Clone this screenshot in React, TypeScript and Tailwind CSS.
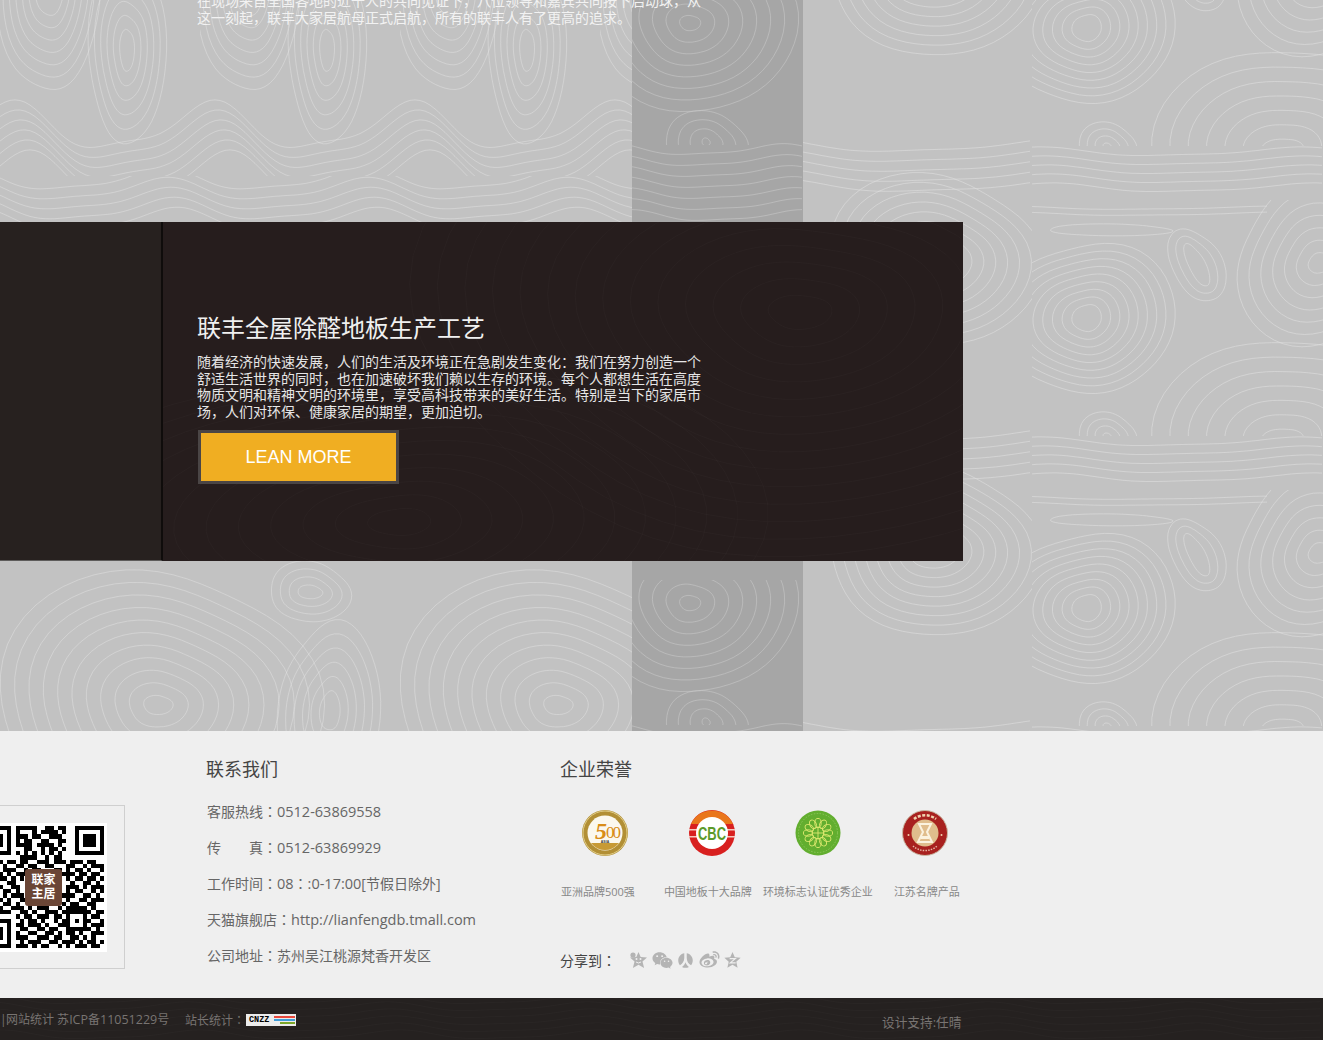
import type { ReactNode } from "react";
import { FaRenren, FaWeibo, FaWeixin } from "react-icons/fa";

function blob(cx: number, cy: number, rx: number, ry: number, seed: number, tilt = 0) {
  const pts: string[] = [];
  const n = 60;
  const t = (tilt * Math.PI) / 180;
  for (let i = 0; i < n; i++) {
    const a = (i / n) * Math.PI * 2;
    const f = 1 + 0.06 * Math.sin(2 * a + seed) + 0.035 * Math.sin(3 * a + seed * 2.1) + 0.01 * Math.sin(5 * a + seed * 3.3);
    const x = rx * f * Math.cos(a);
    const y = ry * f * Math.sin(a);
    pts.push(`${(cx + x * Math.cos(t) - y * Math.sin(t)).toFixed(1)} ${(cy + x * Math.sin(t) + y * Math.cos(t)).toFixed(1)}`);
  }
  return `M${pts.join("L")}Z`;
}

function rings(cx: number, cy: number, rx0: number, ry0: number, dx: number, dy: number, n: number, seed: number, tilt = 0) {
  const out: string[] = [];
  for (let i = 0; i < n; i++) out.push(blob(cx, cy, rx0 + dx * i, ry0 + dy * i, seed, tilt));
  return out.join(" ");
}

function wave(x0: number, x1: number, y: number, amp: number, period: number, phase: number) {
  const pts: string[] = [];
  for (let x = x0; x <= x1; x += 5) {
    const v = y + amp * Math.sin(((x - phase) / period) * Math.PI * 2) + amp * 0.3 * Math.sin(((x - phase) / period) * Math.PI * 4 + 1);
    pts.push(`${x} ${v.toFixed(1)}`);
  }
  return `M${pts.join("L")}`;
}

function waves(x0: number, x1: number, y0: number, step: number, n: number, amp: number, period: number, phase: number) {
  const out: string[] = [];
  for (let i = 0; i < n; i++) out.push(wave(x0, x1, y0 + step * i, amp, period, phase + i * 3));
  return out.join(" ");
}

function Topography() {
  return (
    <svg className="absolute inset-0" width="1323" height="731" aria-hidden="true">
      <defs>
        <clipPath id="ltop"><rect x="0" y="0" width="200" height="176" /></clipPath>
        <clipPath id="lmid"><rect x="0" y="176" width="200" height="46" /></clipPath>
        <clipPath id="rr"><rect x="232" y="0" width="300" height="236" /></clipPath>
        <clipPath id="rl"><rect x="0" y="0" width="232" height="290" /></clipPath>
        <clipPath id="stop"><rect x="0" y="0" width="171" height="145" /></clipPath>
        <pattern id="leftTile" x="0" y="0" width="200" height="222" patternUnits="userSpaceOnUse">
          <g fill="none" stroke="#e2e2e2" strokeOpacity="0.7" strokeWidth="0.7">
            <g clipPath="url(#ltop)">
              <path d={rings(127, 50, 7, 22, 6, 15, 6, 1.2)} />
              <path d={rings(50, -15, 14, 32, 6, 13, 7, 2.4)} />
              <path d={waves(0, 200, 128, 10, 6, 22, 200, 60)} />
            </g>
            <g clipPath="url(#lmid)">
              <path d={waves(0, 200, 180, 10, 5, 10, 200, 10)} />
            </g>
          </g>
        </pattern>
        <pattern id="lowerTile" x="0" y="561" width="400" height="170" patternUnits="userSpaceOnUse">
          <g fill="none" stroke="#e2e2e2" strokeOpacity="0.7" strokeWidth="0.7">
            <path d={rings(158, 144, 14, 10, 14, 13, 11, 0.9)} />
            <path d={rings(310, 31, 12, 7, 9, 8, 4, 0.4)} />
            <path d={rings(330, 150, 10, 20, 8, 14, 6, 2.6)} />
            <path d={rings(-70, 144, 14, 10, 10, 13, 6, 1.9)} />
            <path d={rings(470, 144, 14, 10, 10, 13, 6, 1.9)} />
          </g>
        </pattern>
        <pattern id="rightTile" x="800" y="200" width="523" height="290" patternUnits="userSpaceOnUse">
          <g fill="none" stroke="#e0e0e0" strokeOpacity="0.8" strokeWidth="0.7">
            <g clipPath="url(#rl)">
              <path d={rings(133, 60, 14, 9, 11, 10, 9, 0.7)} />
              <path d={rings(133, 350, 14, 9, 11, 10, 9, 0.7)} />
              <path d={waves(0, 232, 236, 10, 5, 6, 300, 30)} />
            </g>
            <g clipPath="url(#rr)">
              <path d={rings(287, 118, 14, 14, 9, 8, 9, 2.1)} />
              <path d={rings(307, 236, 4, 3, 8, 7, 4, 0.4)} />
              <path d={rings(483, 240, 20, 12, 17, 16, 7, 1.6)} />
            </g>
            <path d={rings(520, 63, 12, 10, 12, 12, 7, 3.4)} />
            <path d={rings(397, 65, 8, 24, 8, 8, 3, 0.5, -25)} />
            <path d={blob(310, 30, 60, 6, 0.2)} />
            <path d={waves(232, 523, 242, 9, 5, 4, 260, 40)} />
            <path d={waves(232, 470, 8, 6, 2, 1.5, 260, 10)} />
          </g>
        </pattern>
        <pattern id="stripTile" x="632" y="0" width="171" height="290" patternUnits="userSpaceOnUse">
          <g fill="none" stroke="#cfcfcf" strokeOpacity="0.7" strokeWidth="0.7">
            <g clipPath="url(#stop)">
              <path d={rings(58, 23, 10, 8, 13, 12, 8, 1.1)} />
              <path d={rings(74, 142, 4, 4, 12, 9, 4, 0.3)} />
            </g>
            <path d={waves(0, 171, 150, 11, 7, 5, 170, 20)} />
          </g>
        </pattern>
      </defs>
      <rect x="0" y="0" width="632" height="222" fill="url(#leftTile)" />
      <rect x="0" y="561" width="632" height="170" fill="url(#lowerTile)" />
      <rect x="632" y="0" width="171" height="731" fill="#a6a6a6" />
      <rect x="632" y="0" width="171" height="731" fill="url(#stripTile)" />
      <rect x="803" y="0" width="520" height="731" fill="url(#rightTile)" />
    </svg>
  );
}

const qrRows = [
  "00000000111110011011000000000",
  "00000000100010111101000000000",
  "00000000111011001110000000000",
  "00000000101100110011000000000",
  "00000000111101111010000000000",
  "00000000001100101101000000000",
  "00000000101010101010000000000",
  "00000000011110010110000000000",
  "01101011011001110111011101100",
  "11010100110110011000110010111",
  "00110111001011000110101101001",
  "10011010111000000001110110110",
  "01101101010000000000101101101",
  "11010011000000000000010011010",
  "00111001100000000000111010111",
  "10100110100000000000101100101",
  "01110101110000000001110011010",
  "11001010011000000000100110111",
  "10110110100110101101011001100",
  "01001001110101110010111110100",
  "11101110011010011101100011011",
  "00000000101101110110101010110",
  "00000000010110100101100011001",
  "00000000110111010011111110111",
  "00000000011001101100101011010",
  "00000000100110011010110100111",
  "00000000111001110110011010100",
  "00000000010111001101110101101",
  "00000000111010110010101110110",
];

function Finder({ x, y }: { x: number; y: number }) {
  return (
    <g>
      <rect x={x} y={y} width="7" height="7" fill="#000" />
      <rect x={x + 1} y={y + 1} width="5" height="5" fill="#fff" />
      <rect x={x + 2} y={y + 2} width="3" height="3" fill="#000" />
    </g>
  );
}

function Qr() {
  return (
    <svg width="122" height="122" viewBox="0 0 29 29" shapeRendering="crispEdges" aria-hidden="true">
      {qrRows.map((row, r) =>
        row.split("").map((c, i) => (c === "1" ? <rect key={`${r}-${i}`} x={i} y={r} width="1" height="1" fill="#000" /> : null)),
      )}
      <Finder x={0} y={0} />
      <Finder x={22} y={0} />
      <Finder x={0} y={22} />
      <rect x="20" y="20" width="5" height="5" fill="#000" />
      <rect x="21" y="21" width="3" height="3" fill="#fff" />
      <rect x="22" y="22" width="1" height="1" fill="#000" />
    </svg>
  );
}

function Badge500() {
  return (
    <svg width="46" height="46" viewBox="0 0 46 46" aria-hidden="true">
      <circle cx="23" cy="23" r="23" fill="#b28f35" />
      <circle cx="23" cy="23" r="22" fill="none" stroke="#e2cf8a" strokeWidth="1" />
      <circle cx="23" cy="23" r="17.5" fill="#fbf8ee" />
      <path d="M9 33 A17.5 17.5 0 0 0 37 33 Z" fill="#c79a35" />
      <text x="13" y="29" fontFamily="Liberation Serif, serif" fontStyle="italic" fontWeight="700" fontSize="24" fill="#d98d17">5</text>
      <text x="24" y="28" fontFamily="Liberation Serif, serif" fontWeight="400" fontSize="17" fill="#d98d17" letterSpacing="-2">00</text>
      <text x="23" y="33" textAnchor="middle" fontFamily="Liberation Sans, sans-serif" fontWeight="700" fontSize="3.5" fill="#333">ASIA</text>
    </svg>
  );
}

function BadgeCbc() {
  return (
    <svg width="46" height="46" viewBox="0 0 46 46" aria-hidden="true">
      <circle cx="23" cy="23" r="23" fill="#d8201f" />
      <path d="M2 14 A23 23 0 0 1 44 14 Z" fill="#e9761c" />
      <rect x="0" y="19" width="46" height="1.5" fill="#f5c9bf" />
      <rect x="0" y="26" width="46" height="1.5" fill="#f5c9bf" />
      <circle cx="23" cy="23" r="16" fill="#fff" />
      <text x="23" y="29.5" textAnchor="middle" fontFamily="Liberation Sans, sans-serif" fontWeight="700" fontSize="18" fill="#5c9a2a" textLength="28" lengthAdjust="spacingAndGlyphs">CBC</text>
    </svg>
  );
}

function BadgeGreen() {
  const petals = Array.from({ length: 12 }, (_, i) => (i * 360) / 12);
  return (
    <svg width="46" height="46" viewBox="0 0 46 46" aria-hidden="true">
      <circle cx="23" cy="23" r="22.5" fill="#62ae2f" />
      <circle cx="23" cy="23" r="19.5" fill="none" stroke="#8cc75a" strokeWidth="1" strokeDasharray="1.5 1.5" />
      {petals.map((a) => (
        <ellipse key={a} cx="23" cy="13" rx="3.2" ry="4.6" fill="none" stroke="#dfe96f" strokeWidth="0.9" transform={`rotate(${a} 23 23)`} />
      ))}
      <circle cx="23" cy="23" r="6" fill="none" stroke="#dfe96f" strokeWidth="0.9" />
      <path d="M18 23 H28 M23 18 V28" stroke="#dfe96f" strokeWidth="0.9" />
    </svg>
  );
}

function BadgeRed() {
  return (
    <svg width="46" height="46" viewBox="0 0 46 46" aria-hidden="true">
      <circle cx="23" cy="23" r="22.5" fill="#a8211f" stroke="#c9b9a5" strokeWidth="1" />
      <circle cx="23" cy="23" r="13.5" fill="#e0bd8d" />
      <path d="M17 14 H29 L25 22 L30 32 H16 L21 22 Z" fill="none" stroke="#fbf2df" strokeWidth="2" />
      <rect x="19" y="26" width="8" height="3" fill="#fbf2df" />
      <circle cx="6.5" cy="25" r="1" fill="#f0d4b0" />
      <circle cx="39.5" cy="25" r="1" fill="#f0d4b0" />
      <path d="M12 9 A18 18 0 0 1 34 9" fill="none" stroke="#f0d4b0" strokeWidth="2.5" strokeDasharray="3 1.5" />
      <path d="M11 36 A18 18 0 0 0 35 36" fill="none" stroke="#e6b8a8" strokeWidth="1.5" strokeDasharray="1.5 1.2" />
    </svg>
  );
}

function StarFace() {
  return (
    <svg width="19" height="18" viewBox="0 0 18 18" aria-hidden="true">
      <path d="M9 1 L11.2 6 L17.5 6.6 L13 10.6 L14.6 17 L9 13.8 L3.4 17 L5 10.6 L.5 6.6 L6.8 6 Z" fill="#b4b4b4" />
      <circle cx="3.5" cy="4" r="2.6" fill="#b4b4b4" />
      <circle cx="7" cy="8" r="1" fill="#efefef" />
      <circle cx="11" cy="8" r="1" fill="#efefef" />
      <path d="M6.5 11 Q9 13 11.5 11" stroke="#efefef" strokeWidth="1" fill="none" />
    </svg>
  );
}

function StarPlain() {
  return (
    <svg width="17" height="18" viewBox="0 0 18 18" aria-hidden="true">
      <path d="M9 .5 L11.4 6 L17.6 6.6 L13 10.8 L14.4 17.2 L9 13.9 L3.6 17.2 L5 10.8 L.4 6.6 L6.6 6 Z" fill="#b4b4b4" />
      <path d="M6 7.6 H12 L6.6 12 H12.4" fill="none" stroke="#efefef" strokeWidth="1.2" />
    </svg>
  );
}

function Num({ children }: { children: ReactNode }) {
  return <span className="text-[14.5px]">{children}</span>;
}

function Colon() {
  return <span className="font-['Noto_Sans_CJK_TC',sans-serif]">：</span>;
}

export default function App() {
  return (
    <div className="h-[1040px] w-[1323px] overflow-hidden font-['Open_Sans','Noto_Sans_CJK_SC',sans-serif]">
      <section className="relative h-[731px] overflow-hidden bg-[#c2c2c2]">
        <Topography />
        <div className="relative flex h-[222px] flex-col pl-[197px] font-['Liberation_Serif','Noto_Sans_CJK_SC',serif]">
          <p className="-mt-[6px] w-[504px] text-[14px] leading-[16.5px] text-[#f2f2f2]">
            在现场来自全国各地的近千人的共同见证下，八位领导和嘉宾共同按下启动球，从这一刻起，联丰大家居航母正式启航，所有的联丰人有了更高的追求。
          </p>
        </div>
        <div className="relative flex h-[339px] w-[963px] overflow-hidden bg-[#261d1d]">
          <svg className="absolute inset-0" width="963" height="339" aria-hidden="true">
            <g fill="none" stroke="#ffffff" strokeOpacity="0.03" strokeWidth="0.7">
              <path d={rings(800, 90, 30, 18, 26, 18, 14, 1.3)} />
              <path d={rings(400, 300, 30, 14, 30, 14, 12, 2.2)} />
            </g>
          </svg>
          <div className="relative h-full w-[163px] shrink-0 border-r-2 border-b border-r-[#0f0c0b] border-b-[#5e5c5b] bg-[#27211f]" />
          <div className="relative flex flex-col pl-[34px] pt-[91px] font-['Liberation_Serif','Noto_Sans_CJK_SC',serif]">
            <h2 className="text-[24px] font-normal leading-[32px] text-[#f0f0f0]">联丰全屋除醛地板生产工艺</h2>
            <p className="mt-[10px] w-[504px] text-[14px] leading-[16.5px] text-[#e6e6e6]">
              随着经济的快速发展，人们的生活及环境正在急剧发生变化：我们在努力创造一个舒适生活世界的同时，也在加速破坏我们赖以生存的环境。每个人都想生活在高度物质文明和精神文明的环境里，享受高科技带来的美好生活。特别是当下的家居市场，人们对环保、健康家居的期望，更加迫切。
            </p>
            <button className="ml-px mt-[9px] flex h-[54px] w-[201px] items-center justify-center border-[3px] border-[#4a4545] bg-[#f0ae22] font-['Liberation_Sans',sans-serif] text-[18px] text-white">
              LEAN MORE
            </button>
          </div>
        </div>
      </section>

      <footer className="flex h-[267px] bg-[#efefef]">
        <div className="-ml-[25px] mt-[74px] flex h-[164px] w-[150px] shrink-0 items-center justify-end border border-[#cfcfcf] pr-[17px]">
          <div className="relative flex h-[129px] w-[129px] items-center justify-center bg-white">
            <Qr />
            <div className="absolute left-[47px] top-[46px] flex h-[37px] w-[37px] flex-col items-center justify-center rounded-[3px] bg-[#6b4636] text-[12px] font-bold leading-[14px] text-white">
              <span>联家</span>
              <span>主居</span>
            </div>
          </div>
        </div>

        <div className="ml-[81px] w-[354px] shrink-0 pt-[24px]">
          <h3 className="text-[18px] font-normal leading-[28px] text-[#444]">联系我们</h3>
          <ul className="mt-[10px] pl-px text-[14px] text-[#666]">
            <li className="h-9 leading-9">客服热线<Colon /><Num>0512-63869558</Num></li>
            <li className="h-9 leading-9">传　　真<Colon /><Num>0512-63869929</Num></li>
            <li className="h-9 leading-9">工作时间<Colon /><Num>08</Num><Colon /><Num>:0-17:00</Num>[节假日除外]</li>
            <li className="h-9 leading-9">天猫旗舰店<Colon /><Num>http://lianfengdb.tmall.com</Num></li>
            <li className="h-9 leading-9">公司地址<Colon />苏州吴江桃源梵香开发区</li>
          </ul>
        </div>

        <div className="w-[420px] shrink-0 pt-[24px]">
          <h3 className="text-[18px] font-normal leading-[28px] text-[#444]">企业荣誉</h3>
          <div className="mt-[27px] flex gap-[60.5px] pl-[22px]">
            <Badge500 />
            <BadgeCbc />
            <BadgeGreen />
            <BadgeRed />
          </div>
          <div className="mt-[27px] flex pl-px text-[11px] leading-[18px] text-[#888]">
            <span className="whitespace-nowrap">亚洲品牌500强</span>
            <span className="ml-[29px] whitespace-nowrap">中国地板十大品牌</span>
            <span className="ml-[11px] whitespace-nowrap">环境标志认证优秀企业</span>
            <span className="ml-[21px] whitespace-nowrap">江苏名牌产品</span>
          </div>
          <div className="mt-[47px] flex h-6 items-center text-[14px] text-[#444]">
            <span>分享到<Colon /></span>
            <div className="ml-[13px] flex items-center text-[#b4b4b4]">
              <StarFace />
              <FaWeixin className="ml-[4px] h-[19px] w-[21px]" />
              <FaRenren className="ml-[5px] h-[17px] w-[15px]" />
              <FaWeibo className="ml-[6px] h-[20px] w-[21px]" />
              <span className="ml-[4px] flex"><StarPlain /></span>
            </div>
          </div>
        </div>
      </footer>

      <div className="relative flex h-[42px] items-start overflow-hidden bg-[#252120] pt-[13px] text-[12px] leading-[18px] text-[#787472]">
        <svg className="absolute inset-0" width="1323" height="42" aria-hidden="true">
          <g fill="none" stroke="#ffffff" strokeOpacity="0.03" strokeWidth="0.7">
            <path d={waves(0, 1323, 2, 7, 6, 4, 200, 30)} />
          </g>
        </svg>
        <span className="relative w-[6px] shrink-0">|</span>
        <span className="relative w-[179px] shrink-0 whitespace-nowrap">网站统计 苏<span className="text-[12.5px]">ICP</span>备<span className="text-[12.5px]">11051229</span>号</span>
        <span className="relative w-[61px] shrink-0 whitespace-nowrap">站长统计<Colon /></span>
        <div className="relative mt-[3px] flex h-[12px] w-[50px] shrink-0 items-center justify-between bg-[#ececec] pl-[3px] pr-[1px]">
          <span className="font-['Liberation_Mono',monospace] text-[8.5px] font-bold leading-none text-black">CNZZ</span>
          <div className="flex w-[21px] flex-col gap-px">
            <span className="h-[2px] bg-[#e8483c]" />
            <span className="h-[2px] bg-[#3d9bd8]" />
            <span className="ml-[6px] h-[2px] bg-[#7da72a]" />
          </div>
        </div>
        <span className="relative ml-[586px] mt-[2px] whitespace-nowrap text-[12.7px]">设计支持:任晴</span>
      </div>
    </div>
  );
}
